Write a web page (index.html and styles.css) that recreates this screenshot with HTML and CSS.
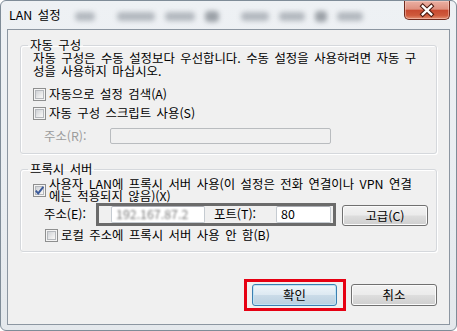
FILE: index.html
```html
<!DOCTYPE html>
<html lang="ko">
<head>
<meta charset="utf-8">
<title>LAN 설정</title>
<link rel="stylesheet" href="styles.css">
</head>
<body>
<div class="window">
  <div class="titlebar">
    <span class="title">LAN 설정</span>
    <div class="glass">
      <span class="blob w20"></span>
      <span class="blob w38 gap"></span>
      <span class="blob w30"></span>
      <span class="blob w14 light"></span>
      <span class="blob w28 gap"></span>
      <span class="blob w26"></span>
      <span class="blob w12 light"></span>
      <span class="blob w26"></span>
    </div>
    <button class="close" type="button" aria-label="닫기">
      <svg width="46" height="18" viewBox="0 0 46 18">
        <path d="M18.5 5 L27.5 13.5 M27.5 5 L18.5 13.5" stroke="#4a1a10" stroke-width="4.6" stroke-linecap="square" fill="none"/>
        <path d="M18.5 5 L27.5 13.5 M27.5 5 L18.5 13.5" stroke="#ffffff" stroke-width="2.4" stroke-linecap="square" fill="none"/>
      </svg>
    </button>
  </div>
  <div class="client">
    <fieldset class="group auto">
      <legend>자동 구성</legend>
      <p class="desc">자동 구성은 수동 설정보다 우선합니다. 수동 설정을 사용하려면 자동 구<br>성을 사용하지 마십시오.</p>
      <label class="check first"><span class="box"></span><span class="text">자동으로 설정 검색(A)</span></label>
      <label class="check second"><span class="box"></span><span class="text">자동 구성 스크립트 사용(S)</span></label>
      <div class="field-row script">
        <span class="field-label disabled">주소(R):</span>
        <span class="input disabled-input wide"></span>
      </div>
    </fieldset>

    <fieldset class="group proxy">
      <legend>프록시 서버</legend>
      <label class="check multi"><span class="box checked"><svg width="11" height="11" viewBox="0 0 11 11"><path d="M1.8 5.6 L4.2 8.4 L9.3 1.8" stroke="#3b5a9a" stroke-width="1.9" fill="none"/></svg></span><span class="text">사용자 LAN에 프록시 서버 사용(이 설정은 전화 연결이나 VPN 연결<br>에는 적용되지 않음)(X)</span></label>
      <div class="field-row proxy-row">
        <span class="field-label">주소(E):</span>
        <div class="mark">
          <span class="input addr"><span class="blurred">192.167.87.2</span></span>
          <span class="port-label">포트(T):</span>
          <span class="input port">80</span>
        </div>
        <button class="btn adv" type="button">고급(C)</button>
      </div>
      <label class="check local"><span class="box"></span><span class="text">로컬 주소에 프록시 서버 사용 안 함(B)</span></label>
    </fieldset>

    <div class="actions">
      <span class="highlight"><button class="btn default" type="button">확인</button></span>
      <button class="btn" type="button">취소</button>
    </div>
  </div>
</div>
</body>
</html>
```

FILE: styles.css
```css
* { box-sizing: border-box; }

html, body {
  margin: 0;
  padding: 0;
}

body {
  width: 457px;
  height: 331px;
  overflow: hidden;
  background: #ffffff;
  font-family: "Noto Sans CJK KR", "Liberation Sans", sans-serif;
  font-size: 12.4px;
  word-spacing: 2px;
  color: #000;
}

.window {
  width: 457px;
  height: 331px;
  display: flex;
  flex-direction: column;
  border: 1px solid #7f8c98;
  border-radius: 6px;
  background: linear-gradient(#eef1f4, #e9edf1 60%, #e4e8ec);
  padding-bottom: 5px;
}

.titlebar {
  height: 28px;
  display: flex;
  align-items: flex-start;
  flex: none;
}

.title {
  margin: 6px 0 0 8px;
  line-height: 16px;
  white-space: nowrap;
}

.glass {
  display: flex;
  align-items: center;
  margin: 9px 0 0 14px;
  height: 12px;
  flex: 1;
}

.blob {
  height: 9px;
  margin-right: 10px;
  background: #a9afb6;
  border-radius: 4px;
  filter: blur(2.5px);
  opacity: 0.85;
}
.blob.light { background: #8d939a; height: 11px; }
.blob.gap { margin-left: 12px; }
.w12 { width: 12px; }
.w14 { width: 14px; }
.w20 { width: 20px; }
.w26 { width: 26px; }
.w28 { width: 28px; }
.w30 { width: 30px; }
.w38 { width: 38px; }

.close {
  width: 46px;
  height: 19px;
  margin: 0 6px 0 0;
  padding: 0;
  border: 1px solid #6f2a1d;
  border-top: none;
  border-radius: 0 0 5px 5px;
  background: linear-gradient(#eab0a3 0%, #df907f 45%, #c84a30 52%, #cf5a3c 80%, #e49073 100%);
  box-shadow: inset 0 0 0 1px rgba(255, 220, 210, 0.45);
  display: flex;
  align-items: center;
  justify-content: center;
}
.close svg { display: block; }

.client {
  flex: 1;
  margin: 0 6px 0 6px;
  border: 1px solid #8c96a1;
  background: #f0f0f0;
  padding: 7px 12px 0 12px;
  display: flex;
  flex-direction: column;
}

.group {
  margin: 0;
  padding: 0 0 8px 12px;
  border: 1px solid #d5d8dc;
  border-radius: 3px;
  box-shadow: inset 1px 1px 0 #ffffff, 1px 1px 0 #ffffff;
  min-width: 0;
}

.group legend {
  padding: 0 2px;
  margin-left: -5px;
  line-height: 16px;
}

.proxy {
  margin-top: 7px;
  padding-bottom: 9px;
}

.desc {
  margin: -1px 0 0 0;
  line-height: 13px;
  white-space: nowrap;
}

.check {
  display: flex;
  align-items: center;
  line-height: 13px;
  white-space: nowrap;
}

.check .text { margin-left: 3px; }

.check.first { margin-top: 10px; }
.check.second { margin-top: 6px; }

.check.multi {
  margin-top: 1px;
  line-height: 12px;
}

.check.local {
  margin: 3px 0 0 12px;
}

.box {
  width: 13px;
  height: 13px;
  flex: none;
  border: 1px solid #8e8f8f;
  background: #f4f4f4;
  position: relative;
  display: flex;
  align-items: center;
  justify-content: center;
}

.box::before {
  content: "";
  position: absolute;
  left: 1px;
  top: 1px;
  right: 1px;
  bottom: 1px;
  border: 1px solid #b5b8bc;
  background: linear-gradient(135deg, #cfd2d6, #eeeeee 70%, #f8f8f8);
}

.box svg {
  position: relative;
  display: block;
}

.field-row {
  display: flex;
  align-items: center;
}

.field-label {
  width: 52px;
  margin-left: 11px;
  flex: none;
  white-space: nowrap;
}

.disabled { color: #9c9c9c; }

.field-row.script { margin-top: 7px; }

.input {
  height: 16px;
  background: #ffffff;
  border: 1px solid #c5cbd1;
  border-top-color: #abadb3;
  border-radius: 2px;
  display: flex;
  align-items: center;
  padding-left: 4px;
  line-height: 14px;
  white-space: nowrap;
}

.disabled-input {
  background: #f0f0f0;
  border: 1px solid #b9bcbf;
}

.wide { width: 221px; margin-left: 14px; }

.mark {
  display: flex;
  align-items: center;
  width: 240px;
  height: 23px;
  border: 3px solid #6b6b6b;
  padding: 0 2px 0 12px;
}

.mark .input { height: 17px; }

.addr { width: 94px; padding-left: 4px; }

.blurred {
  color: #7a7a7a;
  filter: blur(1.3px);
}

.port-label {
  margin-left: 9px;
  white-space: nowrap;
}

.port {
  width: 55px;
  margin-left: auto;
  padding-left: 4px;
}

.btn {
  width: 86px;
  height: 22px;
  padding: 0;
  font-family: inherit;
  font-size: 12.4px;
  color: #000;
  border: 1px solid #707070;
  border-radius: 3px;
  background: linear-gradient(#f2f2f2 0%, #ebebeb 48%, #dddddd 52%, #cfcfcf 100%);
  box-shadow: inset 0 0 0 1px #fbfbfb;
}

.btn.adv {
  align-self: flex-start;
  margin: 3px 0 0 6px;
  height: 21px;
}

.btn.default {
  width: 85px;
  border-color: #3c7fb1;
  background: linear-gradient(#eef5fa 0%, #dde9f2 48%, #cadbe8 52%, #b9cfe0 100%);
  box-shadow: inset 0 0 0 1px #bfe3f5;
}

.actions {
  display: flex;
  justify-content: flex-end;
  align-items: center;
  margin-top: 32px;
  gap: 14px;
}

.highlight {
  position: relative;
  display: flex;
}

.highlight::after {
  content: "";
  position: absolute;
  left: -8px;
  right: -9px;
  top: -5px;
  bottom: -5px;
  border: 3px solid #e60012;
  pointer-events: none;
}
```
